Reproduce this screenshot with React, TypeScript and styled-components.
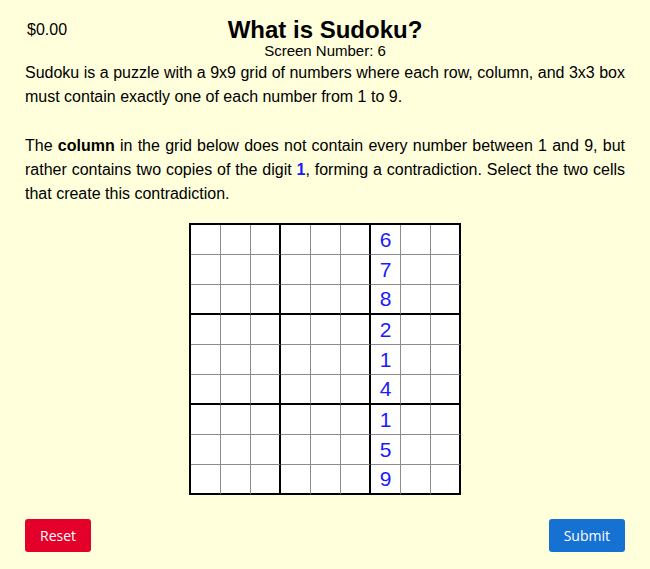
import React from 'react';
import styled, { createGlobalStyle } from 'styled-components';

const GlobalStyle = createGlobalStyle`
  html, body {
    margin: 0;
    padding: 0;
    background: #ffffdc;
  }
  body {
    font-family: "Liberation Sans", Arial, sans-serif;
    color: #000;
  }
`;

const Page = styled.div`
  width: 650px;
  height: 569px;
  box-sizing: border-box;
  padding: 0 25px;
  background: #ffffdc;
  display: flex;
  flex-direction: column;
`;

const Header = styled.div`
  display: grid;
  grid-template-columns: 1fr auto 1fr;
  align-items: center;
  padding-top: 17px;
`;

const Money = styled.div`
  font-size: 16px;
  padding-left: 2px;
`;

const Title = styled.h1`
  margin: 0;
  font-size: 24px;
  font-weight: bold;
  line-height: 26px;
  text-align: center;
`;

const SubTitle = styled.div`
  text-align: center;
  font-size: 15px;
  line-height: 16px;
`;

const Para = styled.p<{ $gap: number }>`
  margin: ${({ $gap }) => $gap}px 0 0;
  font-size: 16px;
  line-height: 24px;
  text-align: justify;
`;

const Digit = styled.b`
  color: #1a1aff;
`;

const BoardWrap = styled.div`
  display: flex;
  justify-content: center;
  margin-top: 17px;
`;

const Board = styled.div`
  display: grid;
  grid-template-columns: repeat(9, 30px);
  grid-auto-rows: 30px;
  background: #fff;
  border-left: 2px solid #000;
  border-top: 2px solid #000;
`;

const Cell = styled.div<{ $right: boolean; $bottom: boolean }>`
  box-sizing: border-box;
  display: flex;
  align-items: center;
  justify-content: center;
  border-right: ${({ $right }) => ($right ? '2px solid #000' : '1px solid #8c8c8c')};
  border-bottom: ${({ $bottom }) => ($bottom ? '2px solid #000' : '1px solid #8c8c8c')};
  font-size: 21px;
  color: #1a1aff;
`;

const Actions = styled.div`
  display: flex;
  justify-content: space-between;
  margin-top: 24px;
`;

const Button = styled.button<{ $tone: 'red' | 'blue' }>`
  height: 33px;
  padding: 0 15px;
  border: none;
  border-radius: 3px;
  color: #fff;
  font-family: "Open Sans", "Noto Sans", sans-serif;
  font-size: 14px;
  background: ${({ $tone }) => ($tone === 'red' ? '#e4002b' : '#1572d2')};
  cursor: pointer;
`;

const column = ['6', '7', '8', '2', '1', '4', '1', '5', '9'];

export default function App() {
  return (
    <Page>
      <GlobalStyle />
      <Header>
        <Money>$0.00</Money>
        <Title>What is Sudoku?</Title>
        <div />
      </Header>
      <SubTitle>Screen Number: 6</SubTitle>
      <Para $gap={2}>
        Sudoku is a puzzle with a 9x9 grid of numbers where each row, column, and 3x3 box
        must contain exactly one of each number from 1 to 9.
      </Para>
      <Para $gap={25}>
        The <b>column</b> in the grid below does not contain every number between 1 and 9, but
        rather contains two copies of the digit <Digit>1</Digit>, forming a contradiction. Select
        the two cells that create this contradiction.
      </Para>
      <BoardWrap>
        <Board>
          {column.map((d, r) =>
            Array.from({ length: 9 }, (_, c) => (
              <Cell key={`${r}-${c}`} $right={c % 3 === 2} $bottom={r % 3 === 2}>
                {c === 6 ? d : ''}
              </Cell>
            ))
          )}
        </Board>
      </BoardWrap>
      <Actions>
        <Button $tone="red">Reset</Button>
        <Button $tone="blue">Submit</Button>
      </Actions>
    </Page>
  );
}
